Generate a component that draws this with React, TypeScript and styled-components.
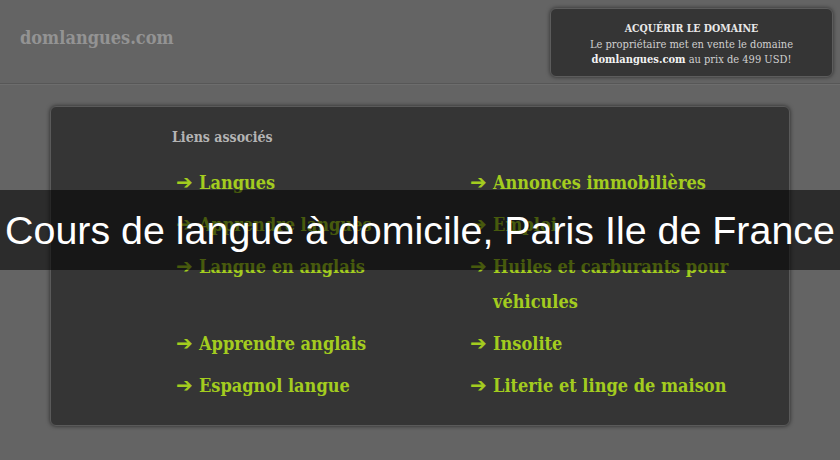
import styled, { createGlobalStyle } from 'styled-components';

const GlobalStyle = createGlobalStyle`
  html, body {
    margin: 0;
    padding: 0;
    background: #646464;
  }
  body {
    font-family: "DejaVu Serif Condensed", "DejaVu Serif", serif;
    font-stretch: condensed;
    width: 840px;
    height: 460px;
    overflow: hidden;
    position: relative;
  }
`;

const Header = styled.header`
  height: 84px;
  box-sizing: border-box;
  border-bottom: 1px solid #575757;
  box-shadow: 0 1px 0 #6d6d6d;
  display: flex;
  justify-content: space-between;
  align-items: flex-start;
  padding: 8px 7px 0 20px;
`;

const Logo = styled.div`
  margin-top: 19px;
  font-size: 18px;
  font-weight: bold;
  color: #939393;
`;

const SaleBox = styled.div`
  width: 283px;
  height: 69px;
  box-sizing: border-box;
  background: #353535;
  border: 1px solid #5c5c5c;
  border-radius: 6px;
  box-shadow: 0 0 4px rgba(0, 0, 0, 0.55);
  display: flex;
  flex-direction: column;
  align-items: center;
  justify-content: center;
  font-size: 11px;
  line-height: 15px;
  color: #d0d0d0;
  padding-top: 2px;
`;

const SaleTitle = styled.div`
  font-weight: bold;
  color: #e8e8e8;
  font-size: 10.5px;
  margin-bottom: 1px;
`;

const Strong = styled.b`
  color: #f2f2f2;
`;

const Panel = styled.main`
  margin: 22px 50px 0;
  height: 320px;
  box-sizing: border-box;
  background: #353535;
  border: 1px solid #5a5a5a;
  border-radius: 6px;
  box-shadow: 0 0 4px rgba(0, 0, 0, 0.6);
  padding: 20px 0 0 121px;
`;

const PanelTitle = styled.h2`
  margin: 0 0 18px;
  font-size: 14px;
  font-weight: 600;
  color: #b4b4b4;
  line-height: 20px;
`;

const LinkGrid = styled.ul`
  list-style: none;
  margin: 0;
  padding: 0 0 0 4px;
  display: grid;
  grid-template-columns: 294px 294px;
  row-gap: 7px;
`;

const LinkItem = styled.li`
  display: flex;
  align-items: flex-start;
  font-size: 18px;
  font-weight: bold;
  line-height: 35px;
  color: #a3cc1f;
`;

const Arrow = styled.span`
  font-family: "DejaVu Sans", sans-serif;
  font-stretch: normal;
  font-size: 20px;
  font-weight: bold;
  width: 23px;
  flex: none;
`;

const Label = styled.span`
  max-width: 262px;
`;

const Banner = styled.div`
  position: absolute;
  left: 0;
  right: 0;
  top: 190px;
  height: 80px;
  background: rgba(0, 0, 0, 0.56);
  display: flex;
  align-items: center;
  justify-content: center;
  font-family: "Liberation Sans", Arial, sans-serif;
  font-stretch: normal;
  font-size: 39.4px;
  color: #ffffff;
  white-space: nowrap;
`;

const links = [
  'Langues',
  'Annonces immobilières',
  'Apprendre langues',
  'Emploi',
  'Langue en anglais',
  'Huiles et carburants pour véhicules',
  'Apprendre anglais',
  'Insolite',
  'Espagnol langue',
  'Literie et linge de maison',
];

export default function App() {
  return (
    <>
      <GlobalStyle />
      <Header>
        <Logo>domlangues.com</Logo>
        <SaleBox>
          <SaleTitle>ACQUÉRIR LE DOMAINE</SaleTitle>
          <div>Le propriétaire met en vente le domaine</div>
          <div>
            <Strong>domlangues.com</Strong> au prix de 499 USD!
          </div>
        </SaleBox>
      </Header>

      <Panel>
        <PanelTitle>Liens associés</PanelTitle>
        <LinkGrid>
          {links.map((l) => (
            <LinkItem key={l}>
              <Arrow>➔</Arrow>
              <Label>{l}</Label>
            </LinkItem>
          ))}
        </LinkGrid>
      </Panel>

      <Banner>Cours de langue à domicile, Paris Ile de France</Banner>
    </>
  );
}
